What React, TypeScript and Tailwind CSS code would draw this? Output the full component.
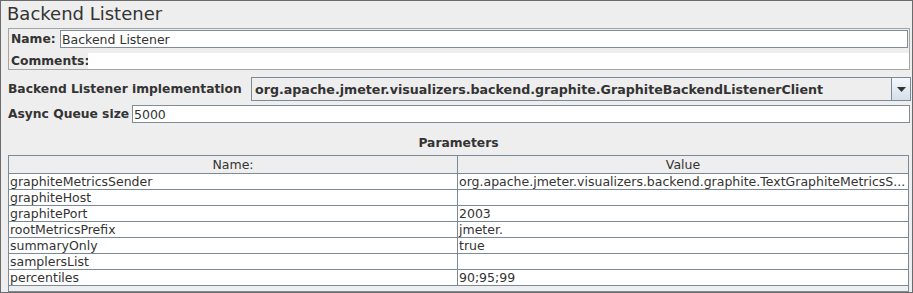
import React from "react";

const params: [string, string][] = [
  ["graphiteMetricsSender", "org.apache.jmeter.visualizers.backend.graphite.TextGraphiteMetricsS..."],
  ["graphiteHost", ""],
  ["graphitePort", "2003"],
  ["rootMetricsPrefix", "jmeter."],
  ["summaryOnly", "true"],
  ["samplersList", ""],
  ["percentiles", "90;95;99"],
];

const font = { fontFamily: "'DejaVu Sans', 'Liberation Sans', sans-serif" };

export default function App() {
  return (
    <div
      style={font}
      className="w-[913px] h-[293px] box-border border border-[#6b6b6b] bg-[#eeeeee] text-[#333333] text-[12.5px] flex flex-col overflow-hidden"
    >
      {/* title */}
      <div className="mt-[2px] h-[21px] leading-[21px] text-[18px] pl-[6px] whitespace-nowrap">
        Backend Listener
      </div>

      {/* name / comments */}
      <div className="mt-[4px] ml-[7px] w-[902px] border border-[#a5a5a5] flex flex-col">
        <div className="flex items-center pt-[1px]">
          <span className="w-[51px] pl-[2px] font-bold text-[12.3px] leading-[15px]">Name:</span>
          <div className="flex-1 h-[18px] mr-[1px] bg-white border border-[#7f8c99] flex items-center pl-[1px] leading-[15px]">
            Backend Listener
          </div>
        </div>
        <div className="flex items-center mt-[5px] h-[16px]">
          <span className="w-[79px] pl-[2px] font-bold text-[12.3px] leading-[15px]">Comments:</span>
          <div className="flex-1 h-[16px] bg-white" />
        </div>
      </div>

      {/* implementation */}
      <div className="mt-[7px] ml-[7px] mr-[1px] h-[24px] flex items-center">
        <span className="w-[243px] font-bold text-[12.3px] leading-[15px] whitespace-nowrap">
          Backend Listener implementation
        </span>
        <div className="flex-1 h-[24px] border border-[#7a8a99] bg-[#eeeeee] flex">
          <div className="flex-1 flex items-center pl-[3px] font-bold text-[12.65px] leading-[15px] whitespace-nowrap">
            org.apache.jmeter.visualizers.backend.graphite.GraphiteBackendListenerClient
          </div>
          <div className="w-[19px] border-l border-[#7a8a99] bg-gradient-to-b from-[#f4f8fc] to-[#d3dfeb] flex items-center justify-center">
            <svg width="9" height="5" viewBox="0 0 9 5">
              <path d="M0 0 H9 L4.5 5 Z" fill="#333333" />
            </svg>
          </div>
        </div>
      </div>

      {/* async queue */}
      <div className="mt-[4px] ml-[7px] mr-[2px] h-[18px] flex items-center">
        <span className="w-[124px] font-bold text-[12.3px] leading-[15px] whitespace-nowrap">Async Queue size</span>
        <div className="flex-1 h-[18px] bg-white border border-[#7f8c99] flex items-center pl-[1px] leading-[15px]">
          5000
        </div>
      </div>

      {/* parameters */}
      <div className="mt-[13px] ml-[7px] mr-[3px] h-[15px] leading-[15px] text-center font-bold text-[12.3px]">
        Parameters
      </div>

      <div className="mt-[4px] ml-[7px] mr-[3px] flex-1 border border-[#7a8a99] flex flex-col">
        <div className="flex h-[18px] border-b border-[#7a8a99] bg-[#eeeeee]">
          <div className="w-[449px] border-r border-[#7a8a99] flex items-center justify-center leading-[15px]">
            Name:
          </div>
          <div className="flex-1 flex items-center justify-center leading-[15px]">Value</div>
        </div>
        {params.map(([k, v]) => (
          <div key={k} className="flex h-[16px] border-b border-[#7a8a99] bg-white">
            <div className="w-[449px] border-r border-[#7a8a99] pl-[1px] leading-[15px] whitespace-nowrap overflow-hidden">
              {k}
            </div>
            <div className="flex-1 pl-[1px] leading-[15px] whitespace-nowrap overflow-hidden">{v}</div>
          </div>
        ))}
      </div>
    </div>
  );
}
